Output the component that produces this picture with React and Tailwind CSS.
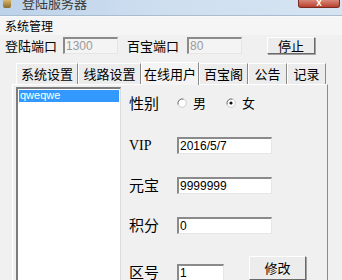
import React from "react";

const cjk = { fontFamily: "'Noto Sans CJK SC', 'Liberation Sans', sans-serif" };
const latin = { fontFamily: "'Liberation Sans', Arial, sans-serif" };

function Field({ value, width = "w-[95px]", disabled = false }) {
  return (
    <div
      className={`${width} h-[17px] border-t-2 border-l-2 border-b border-r border-t-[#8a8a8a] border-l-[#8a8a8a] border-b-[#e6e6e6] border-r-[#e6e6e6] ${
        disabled ? "bg-[#f4f4f4] text-[#9a9a9a]" : "bg-white text-black"
      } text-[12px] leading-[14px] pl-[1px]`}
      style={latin}
    >
      {value}
    </div>
  );
}

function Button({ label, className = "" }) {
  return (
    <div
      className={`flex items-center justify-center bg-[#ececec] border border-t-white border-l-white border-b-[#6a6a6a] border-r-[#6a6a6a] shadow-[1px_1px_0_#a0a0a0] text-[13px] text-black ${className}`}
      style={cjk}
    >
      {label}
    </div>
  );
}

function Radio({ checked }) {
  return (
    <svg width="10" height="10" viewBox="0 0 10 10">
      <circle cx="5" cy="5" r="4.3" fill="white" stroke="#c8c8c8" strokeWidth="0.9" />
      <path d="M1.2 6.5 A4.2 4.2 0 0 1 6.5 1.2" fill="none" stroke="#7a7a7a" strokeWidth="1" />
      {checked && <circle cx="5" cy="5" r="1.6" fill="#111" />}
    </svg>
  );
}

const tabs = [
  { label: "系统设置", w: "w-[62px]" },
  { label: "线路设置", w: "w-[63px]" },
  { label: "在线用户", w: "w-[58px]", active: true },
  { label: "百宝阁", w: "w-[49px]" },
  { label: "公告", w: "w-[39px]" },
  { label: "记录", w: "w-[39px]" },
];

export default function App() {
  return (
    <div className="w-[342px] h-[280px] overflow-hidden bg-[#f0f0f0] text-black" style={cjk}>
      {/* title bar */}
      <div className="h-[15px] flex items-start bg-gradient-to-r from-[#bcd2e9] via-[#cfdff0] to-[#d6e4f2] relative">
        <div className="w-[8px] h-[8px] ml-[3px] mt-0 bg-gradient-to-b from-[#d9b56a] to-[#8c6a2c] rounded-b-[2px]" />
        <div className="ml-[11px] -mt-[5px] text-[13px] leading-[15px] text-[#3a3a3a]">登陆服务器</div>
        <div className="ml-auto mr-[2px] w-[42px] h-[8px] rounded-b-[3px] bg-gradient-to-b from-[#d8877a] to-[#b8402c] border border-t-0 border-[#7a2a20] flex justify-center">
          <span className="text-white text-[10px] leading-[6px] font-bold" style={latin}>x</span>
        </div>
      </div>
      <div className="h-[2px] border-t border-[#a9bcd0] bg-[#f7f9fb]" />

      {/* menu */}
      <div className="h-[18px] flex items-center pl-[5px] text-[12px] bg-[#f5f5f5]">系统管理</div>

      {/* ports row */}
      <div className="h-[21px] flex items-center text-[13px]">
        <span className="ml-[5px]">登陆端口</span>
        <div className="ml-[6px]">
          <Field value="1300" width="w-[55px]" disabled />
        </div>
        <span className="ml-[9px]">百宝端口</span>
        <div className="ml-[8px]">
          <Field value="80" width="w-[55px]" disabled />
        </div>
        <Button label="停止" className="ml-[25px] w-[48px] h-[17px]" />
      </div>

      {/* tabs */}
      <div className="mt-[5px] h-[23px] flex items-end pl-[16px]">
        {tabs.map((t) => (
          <div
            key={t.label}
            className={`${t.w} flex items-center justify-center text-[13px] border border-b-0 border-t-white border-l-white border-r-[#8a8a8a] ${
              t.active ? "h-[23px] bg-[#f4f4f4] relative z-10 -mb-[1px]" : "h-[21px] bg-[#ececec]"
            }`}
          >
            {t.label}
          </div>
        ))}
      </div>

      {/* panel */}
      <div className="ml-[12px] w-[316px] h-[200px] border border-t-white border-l-white border-r-[#8a8a8a] border-b-[#8a8a8a] bg-[#f0f0f0] flex">
        {/* list */}
        <div className="ml-[3px] mt-[2px] w-[105px] h-[200px] bg-white border-t-2 border-l-2 border-r border-t-[#7d7d7d] border-l-[#7d7d7d] border-r-[#dcdcdc]">
          <div className="mx-[1px] mt-[1px] h-[12px] bg-[#3399ff] text-white text-[11px] leading-[11px] pl-[1px]" style={latin}>
            qweqwe
          </div>
        </div>

        {/* details */}
        <div className="ml-[8px] flex flex-col text-[15px]">
          <div className="h-[36px] flex items-center">
            <span className="w-[48px]">性别</span>
            <Radio />
            <span className="ml-[6px] text-[13px]">男</span>
            <span className="ml-[20px]"><Radio checked /></span>
            <span className="ml-[6px] text-[13px]">女</span>
          </div>
          <div className="h-[48px] flex items-center">
            <span className="w-[48px] text-[14px]" style={{ fontFamily: "'Liberation Serif', serif" }}>VIP</span>
            <Field value="2016/5/7" />
          </div>
          <div className="h-[32px] flex items-center">
            <span className="w-[48px]">元宝</span>
            <Field value="9999999" />
          </div>
          <div className="h-[48px] flex items-center">
            <span className="w-[48px]">积分</span>
            <Field value="0" />
          </div>
          <div className="h-[30px] flex items-start">
            <span className="w-[48px] mt-[12px]">区号</span>
            <div className="mt-[15px]">
              <Field value="1" width="w-[47px]" />
            </div>
            <Button label="修改" className="ml-[25px] mt-[7px] w-[57px] h-[24px]" />
          </div>
        </div>
      </div>
    </div>
  );
}
